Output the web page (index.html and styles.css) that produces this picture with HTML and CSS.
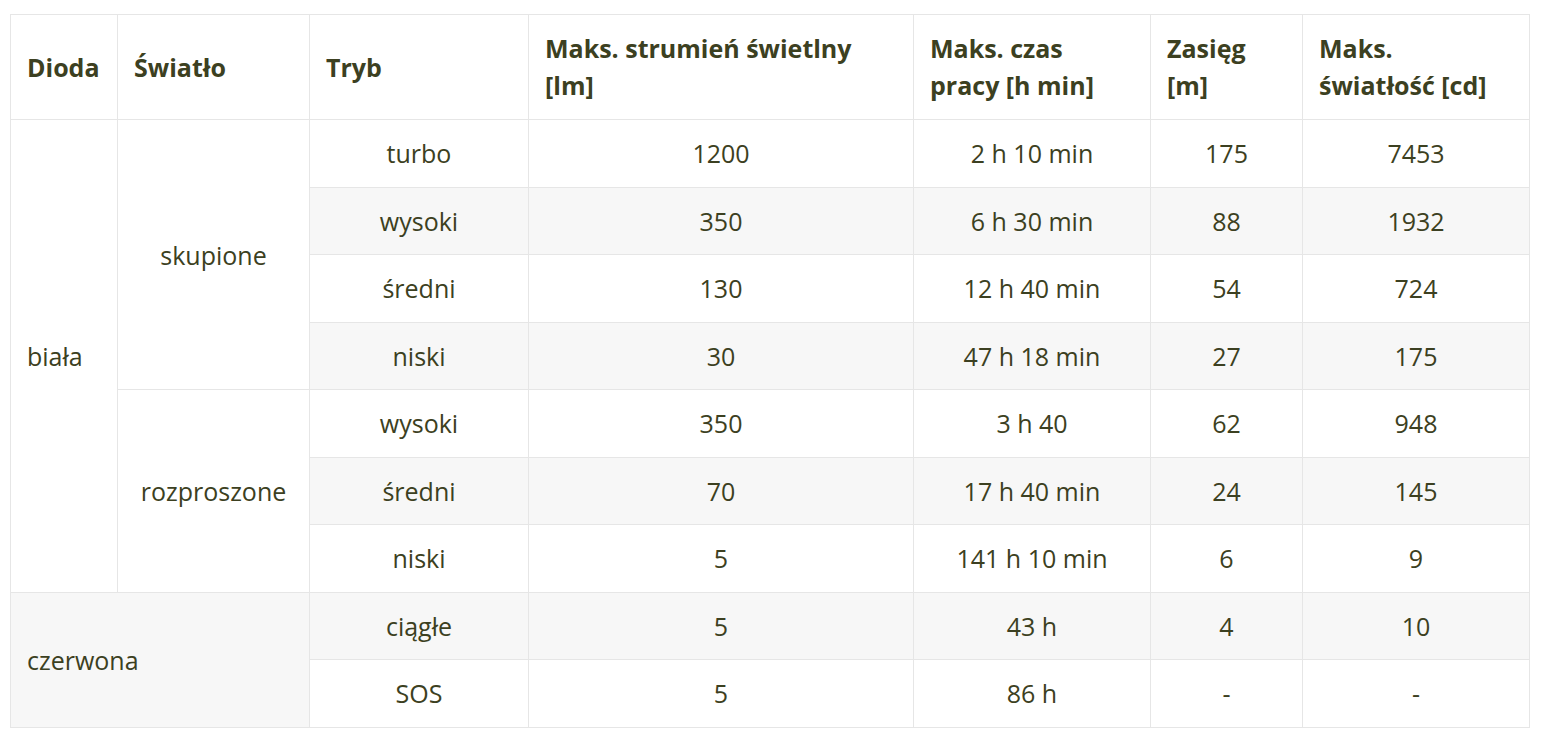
FILE: index.html
```html
<!DOCTYPE html>
<html lang="pl">
<head>
<meta charset="utf-8">
<title>Tabela</title>
<link rel="stylesheet" href="styles.css">
</head>
<body>
<table class="spec">
  <colgroup>
    <col class="c1"><col class="c2"><col class="c3"><col class="c4"><col class="c5"><col class="c6"><col class="c7">
  </colgroup>
  <thead>
    <tr>
      <th>Dioda</th>
      <th>Światło</th>
      <th>Tryb</th>
      <th>Maks. strumień świetlny<br>[lm]</th>
      <th>Maks. czas<br>pracy [h min]</th>
      <th>Zasięg<br>[m]</th>
      <th>Maks.<br>światłość [cd]</th>
    </tr>
  </thead>
  <tbody>
    <tr>
      <td class="left" rowspan="7">biała</td>
      <td rowspan="4">skupione</td>
      <td>turbo</td><td>1200</td><td>2 h 10 min</td><td>175</td><td>7453</td>
    </tr>
    <tr><td>wysoki</td><td>350</td><td>6 h 30 min</td><td>88</td><td>1932</td></tr>
    <tr><td>średni</td><td>130</td><td>12 h 40 min</td><td>54</td><td>724</td></tr>
    <tr><td>niski</td><td>30</td><td>47 h 18 min</td><td>27</td><td>175</td></tr>
    <tr>
      <td rowspan="3">rozproszone</td>
      <td>wysoki</td><td>350</td><td>3 h 40</td><td>62</td><td>948</td>
    </tr>
    <tr><td>średni</td><td>70</td><td>17 h 40 min</td><td>24</td><td>145</td></tr>
    <tr><td>niski</td><td>5</td><td>141 h 10 min</td><td>6</td><td>9</td></tr>
    <tr>
      <td class="left" rowspan="2" colspan="2">czerwona</td>
      <td>ciągłe</td><td>5</td><td>43 h</td><td>4</td><td>10</td>
    </tr>
    <tr><td>SOS</td><td>5</td><td>86 h</td><td>-</td><td>-</td></tr>
  </tbody>
</table>
</body>
</html>
```
FILE: styles.css
```css
html, body {
  margin: 0;
  padding: 0;
  background: #ffffff;
}
body {
  padding: 14px 14px 14px 10px;
  font-family: "Open Sans", "Noto Sans", sans-serif;
  color: #3c4021;
}
.spec {
  border-collapse: collapse;
  width: 1519px;
  table-layout: fixed;
  font-size: 25px;
}
.c1 { width: 107px; }
.c2 { width: 192px; }
.c3 { width: 219px; }
.c4 { width: 385px; }
.c5 { width: 237px; }
.c6 { width: 152px; }
.c7 { width: 227px; }
.spec th,
.spec td {
  border: 1px solid #e6e6e6;
  vertical-align: middle;
}
.spec th {
  height: 105px;
  padding: 0 14px 0 16px;
  text-align: left;
  font-weight: 700;
  line-height: 37px;
  white-space: nowrap;
  box-sizing: border-box;
}
.spec td {
  height: 67.5px;
  padding: 0 12px;
  text-align: center;
  line-height: 30px;
  box-sizing: border-box;
}
.spec td.left {
  text-align: left;
  padding-left: 16px;
}
.spec tbody tr:nth-child(even) {
  background: #f7f7f7;
}
```
